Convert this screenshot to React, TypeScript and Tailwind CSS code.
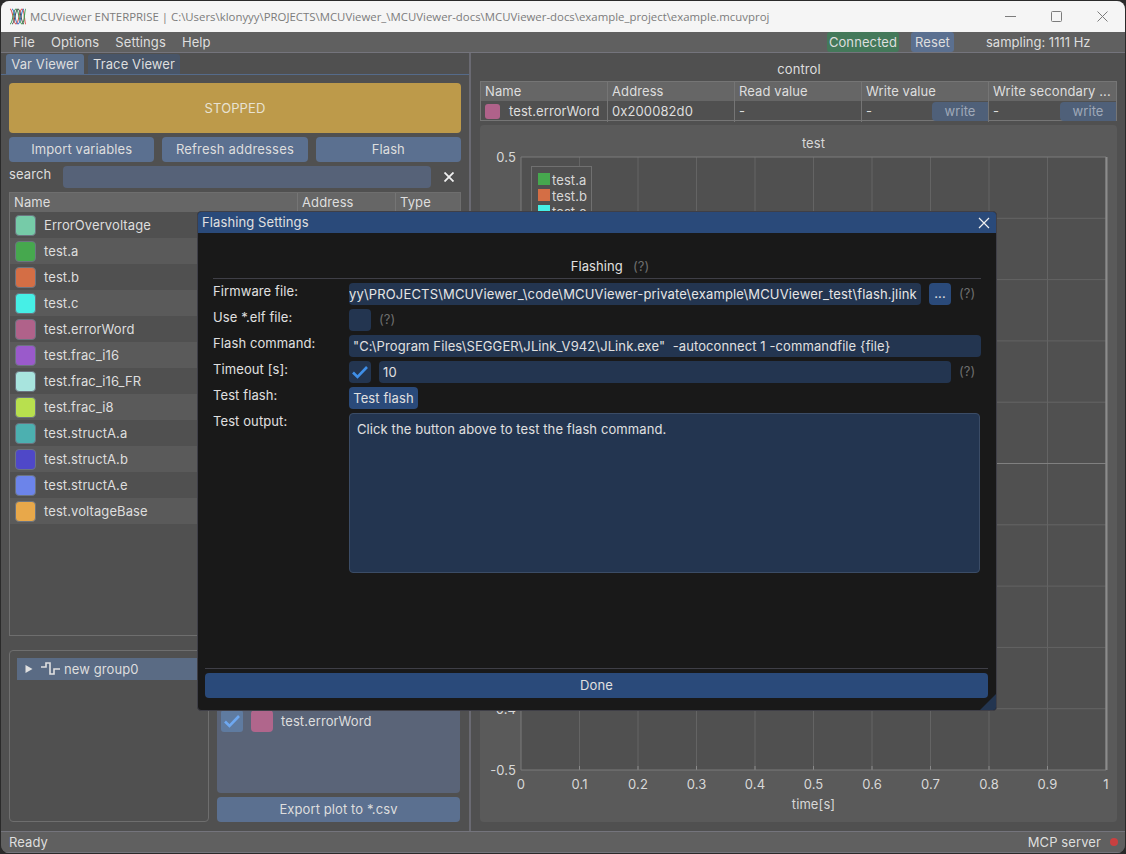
const variables = [
  { name: "ErrorOvervoltage", color: "bg-[#76cba8]" },
  { name: "test.a", color: "bg-[#46a84e]" },
  { name: "test.b", color: "bg-[#d46e45]" },
  { name: "test.c", color: "bg-[#46efe6]" },
  { name: "test.errorWord", color: "bg-[#b0628a]" },
  { name: "test.frac_i16", color: "bg-[#9a5acb]" },
  { name: "test.frac_i16_FR", color: "bg-[#a8e4de]" },
  { name: "test.frac_i8", color: "bg-[#b8e04e]" },
  { name: "test.structA.a", color: "bg-[#4cb0b0]" },
  { name: "test.structA.b", color: "bg-[#4f48c8]" },
  { name: "test.structA.e", color: "bg-[#6c84ea]" },
  { name: "test.voltageBase", color: "bg-[#e8a84a]" },
];

const gridX = [0.1, 0.2, 0.3, 0.4, 0.5, 0.6, 0.7, 0.8, 0.9];
const gridY = [0.4, 0.3, 0.2, 0.1, 0, -0.1, -0.2, -0.3, -0.4];

function Logo() {
  return (
    <svg width="18" height="17" viewBox="0 0 18 17" fill="none" strokeWidth="1.1">
      <path d="M1 1C4 1 4 16 7 16S10 1 13 1 15 16 17 16" stroke="#d9534f" />
      <path d="M1 16C4 16 4 1 7 1S10 16 13 16 15 1 17 1" stroke="#3f9e58" />
      <path d="M3 1C6 1 6 16 9 16S12 1 15 1" stroke="#3b6fc4" />
      <path d="M3 16C6 16 6 1 9 1S12 16 15 16" stroke="#555555" />
    </svg>
  );
}

function Check({ color }: { color: string }) {
  return (
    <svg width="16" height="14" viewBox="0 0 16 14" fill="none" stroke={color} strokeWidth="2.6">
      <path d="M1 7.5L5.5 12L15 2" />
    </svg>
  );
}

function Help() {
  return <span className="text-[#6e6e6e]">(?)</span>;
}

function ControlCell({ children, last }: { children: React.ReactNode; last?: boolean }) {
  return (
    <div className={`flex items-center justify-between pl-[4px] overflow-hidden whitespace-nowrap ${last ? "" : "border-r border-[#757575]"}`}>
      {children}
    </div>
  );
}

function WriteButton() {
  return (
    <div className="w-[56px] h-[19px] rounded-l-[4px] bg-[#4f6079] text-[#9fa9b8] flex items-center justify-center">
      write
    </div>
  );
}

function Chart() {
  return (
    <svg width="637" height="697" viewBox="0 0 637 697" className="block">
      <rect x="41" y="32" width="585" height="613" fill="#505050" />
      {gridX.map((v) => {
        const x = 41 + v * 585;
        return (
          <g key={v}>
            <line x1={x} y1="32" x2={x} y2="645" stroke="#646464" />
            <line x1={x} y1="641" x2={x} y2="645" stroke="#8a8a8a" />
            <text x={x} y="664" fill="#d8d8d8" fontSize="13" textAnchor="middle">{v}</text>
          </g>
        );
      })}
      {gridY.map((v) => {
        const y = 338.5 - v * 613;
        return <line key={v} x1="41" y1={y} x2="626" y2={y} stroke={v === 0 ? "#808080" : "#646464"} />;
      })}
      <path d="M41 645V32H626V645H41" stroke="#7a7a7a" fill="none" />
      <line x1="626.5" y1="32" x2="626.5" y2="645" stroke="#8c8c8c" strokeWidth="2" />
      <text x="36" y="37" fill="#d8d8d8" fontSize="13" textAnchor="end">0.5</text>
      <text x="36" y="589" fill="#d8d8d8" fontSize="13" textAnchor="end">-0.4</text>
      <text x="36" y="650" fill="#d8d8d8" fontSize="13" textAnchor="end">-0.5</text>
      <text x="41" y="664" fill="#d8d8d8" fontSize="13" textAnchor="middle">0</text>
      <text x="626" y="664" fill="#d8d8d8" fontSize="13" textAnchor="middle">1</text>
      <text x="333.5" y="23" fill="#d8d8d8" fontSize="13" textAnchor="middle">test</text>
      <text x="333.5" y="684" fill="#d8d8d8" fontSize="13" textAnchor="middle">time[s]</text>
      <rect x="51.5" y="41.5" width="60" height="70" fill="#505050" stroke="#707070" />
      <rect x="58" y="48" width="12" height="12" fill="#46a84e" />
      <text x="72" y="60" fill="#d8d8d8" fontSize="13">test.a</text>
      <rect x="58" y="64" width="12" height="12" fill="#d46e45" />
      <text x="72" y="76" fill="#d8d8d8" fontSize="13">test.b</text>
      <rect x="58" y="80" width="12" height="12" fill="#46efe6" />
      <text x="72" y="92" fill="#d8d8d8" fontSize="13">test.c</text>
    </svg>
  );
}

function FlashingDialog() {
  return (
    <div className="absolute left-[197px] top-[211px] w-[800px] h-[500px] flex flex-col bg-[#191919] border border-[#3f3f47] rounded-[4px] overflow-hidden text-[#e0e0e0]">
      <div className="h-[21px] shrink-0 bg-[#2a4a7a] flex items-center justify-between pl-[4px] pr-[6px]">
        <span>Flashing Settings</span>
        <svg width="12" height="12" viewBox="0 0 12 12" stroke="#f0f0f0" strokeWidth="1.2">
          <path d="M1 1L11 11M11 1L1 11" />
        </svg>
      </div>
      <div className="px-[15px] pt-[26px]">
        <div className="h-4 flex items-center justify-center gap-[10px] pl-[26px]">
          <span>Flashing</span>
          <Help />
        </div>
        <div className="mt-[3px] border-t border-[#3f3f47]" />
        <div className="mt-[4px] grid grid-cols-[136px_1fr] gap-y-[4px]">
          <div className="leading-4">Firmware file:</div>
          <div className="flex gap-2 h-[22px]">
            <div className="w-[572px] bg-[#233550] rounded-[4px] flex items-center pt-[1px] overflow-hidden whitespace-nowrap tracking-[0.16px] text-[#e6e6e6]">
              yy\PROJECTS\MCUViewer_\code\MCUViewer-private\example\MCUViewer_test\flash.jlink
            </div>
            <div className="w-[22px] bg-[#2a4a7a] rounded-[4px] flex items-center justify-center">...</div>
            <div className="flex items-center"><Help /></div>
          </div>
          <div className="leading-4">Use *.elf file:</div>
          <div className="flex gap-2 h-[22px]">
            <div className="w-[22px] bg-[#233550] rounded-[4px]" />
            <div className="flex items-center"><Help /></div>
          </div>
          <div className="leading-4">Flash command:</div>
          <div className="h-[22px] w-[632px] bg-[#233550] rounded-[4px] flex items-center px-[4px] pt-[1px] whitespace-pre">
            {'"C:\\Program Files\\SEGGER\\JLink_V942\\JLink.exe"  -autoconnect 1 -commandfile {file}'}
          </div>
          <div className="leading-4">Timeout [s]:</div>
          <div className="flex gap-2 h-[22px]">
            <div className="w-[22px] bg-[#233550] rounded-[4px] flex items-center justify-center">
              <Check color="#3f8fe8" />
            </div>
            <div className="w-[572px] bg-[#233550] rounded-[4px] flex items-center px-[4px] pt-[1px]">10</div>
            <div className="flex items-center"><Help /></div>
          </div>
          <div className="leading-4">Test flash:</div>
          <div className="h-[22px] w-[69px] bg-[#2a4a7a] rounded-[4px] flex items-center justify-center pt-[1px]">Test flash</div>
          <div className="leading-4">Test output:</div>
          <div className="h-[160px] w-[631px] bg-[#233550] border border-[#3b4c66] rounded-[4px] px-[7px] py-[7px] leading-4">
            Click the button above to test the flash command.
          </div>
        </div>
      </div>
      <div className="mt-auto pl-[7px] pr-[8px] pb-[12px]">
        <div className="border-t border-[#3f3f47]" />
        <div className="mt-[4px] h-[25px] bg-[#2a4a7a] rounded-[4px] flex items-center justify-center">Done</div>
      </div>
      <svg width="16" height="16" viewBox="0 0 16 16" className="absolute right-0 bottom-0">
        <path d="M16 0V16H0Z" fill="#233550" />
      </svg>
    </div>
  );
}

export default function App() {
  return (
    <div className="relative w-[1126px] h-[854px] bg-[#2a2a2a] overflow-hidden font-['Inter',sans-serif] text-[13px] text-[#dedede] tracking-[0.1px]">
      <div className="absolute inset-0 m-[1px] rounded-[8px] overflow-hidden flex flex-col bg-[#505050]">
        {/* title bar */}
        <div className="h-[31px] shrink-0 bg-[#f5f5f5] flex items-center pl-[8px] text-[#7c7c7c] font-['Open_Sans',sans-serif] text-[11.4px] tracking-normal">
          <Logo />
          <span className="ml-[3px] whitespace-nowrap">
            MCUViewer ENTERPRISE | C:\Users\klonyyy\PROJECTS\MCUViewer_\MCUViewer-docs\MCUViewer-docs\example_project\example.mcuvproj
          </span>
          <div className="ml-auto flex items-center gap-[35px] pr-[17px]">
            <svg width="11" height="11" viewBox="0 0 11 11" stroke="#7c7c7c"><path d="M0 5.5H11" /></svg>
            <svg width="11" height="11" viewBox="0 0 11 11" fill="none" stroke="#7c7c7c"><rect x="0.5" y="0.5" width="10" height="10" rx="1" /></svg>
            <svg width="11" height="11" viewBox="0 0 11 11" stroke="#7c7c7c"><path d="M0.5 0.5L10.5 10.5M10.5 0.5L0.5 10.5" /></svg>
          </div>
        </div>

        {/* menu bar */}
        <div className="h-[21px] shrink-0 bg-[#606060] border-b border-[#74747c] flex items-center pl-[12px]">
          <div className="flex gap-[16px] pt-[1px]">
            <span>File</span>
            <span>Options</span>
            <span>Settings</span>
            <span>Help</span>
          </div>
          <div className="ml-auto flex h-full items-stretch">
            <div className="w-[72px] rounded-[3px] bg-[#44795a] flex items-center justify-center pt-[1px]">Connected</div>
            <div className="ml-[12px] w-[43px] rounded-[3px] bg-[#5b7090] flex items-center justify-center pt-[1px]">Reset</div>
            <div className="ml-[32px] w-[139px] flex items-center pt-[1px] tracking-normal">sampling: 1111 Hz</div>
          </div>
        </div>

        <div className="flex-1 min-h-0 flex">
          {/* left panel */}
          <div className="w-[470px] shrink-0 border-r-2 border-[#6a6a72] flex flex-col">
            <div className="h-[22px] shrink-0 border-b border-[#556b8a] flex items-end pl-[5px] gap-[4px]">
              <div className="w-[78px] h-[20px] rounded-t-[3px] bg-[#5a6f8c] flex items-center justify-center pt-[1px]">Var Viewer</div>
              <div className="w-[92px] h-[20px] rounded-t-[3px] bg-[#485568] flex items-center justify-center pt-[1px]">Trace Viewer</div>
            </div>
            <div className="flex-1 min-h-0 flex flex-col px-[8px] pt-[8px] pb-[9px]">
              <div className="h-[50px] shrink-0 rounded-[4px] bg-[#bd9a4a] flex items-center justify-center pt-[1px] text-[#e8e2d2]">STOPPED</div>
              <div className="mt-[4px] h-[25px] shrink-0 grid grid-cols-3 gap-[8px]">
                <div className="rounded-[4px] bg-[#5b7090] flex items-center justify-center">Import variables</div>
                <div className="rounded-[4px] bg-[#5b7090] flex items-center justify-center tracking-[0.2px]">Refresh addresses</div>
                <div className="rounded-[4px] bg-[#5b7090] flex items-center justify-center">Flash</div>
              </div>
              <div className="mt-[4px] h-[22px] shrink-0 flex items-start">
                <span className="w-[54px] leading-4">search</span>
                <div className="w-[368px] h-full rounded-[4px] bg-[#566278]" />
                <svg width="10" height="10" viewBox="0 0 10 10" stroke="#f0f0f0" strokeWidth="1.8" className="ml-[13px] mt-[6px]">
                  <path d="M0.5 0.5L9.5 9.5M9.5 0.5L0.5 9.5" />
                </svg>
              </div>
              {/* variable table */}
              <div className="mt-[4px] h-[444px] shrink-0 border border-[#6e6e6e] flex flex-col">
                <div className="h-[19px] shrink-0 bg-[#666666] grid grid-cols-[288px_98px_1fr]">
                  <div className="pl-[4px] border-r border-[#757575] flex items-center">Name</div>
                  <div className="pl-[4px] border-r border-[#757575] flex items-center">Address</div>
                  <div className="pl-[4px] flex items-center">Type</div>
                </div>
                {variables.map((v, i) => (
                  <div key={v.name} className={`h-[26px] shrink-0 flex items-center pl-[5px] ${i % 2 === 0 ? "bg-[#505050]" : "bg-[#5a5a5a]"}`}>
                    <div className={`w-[21px] h-[21px] rounded-[4px] border border-[#6c7480] ${v.color}`} />
                    <span className="ml-[8px] pt-[1px]">{v.name}</span>
                  </div>
                ))}
              </div>
              {/* groups and plot variables */}
              <div className="mt-[14px] flex-1 min-h-0 flex gap-[8px]">
                <div className="w-[200px] shrink-0 border border-[#6e6e6e] rounded-[4px] pt-[7px] pl-[7px]">
                  <div className="h-[22px] bg-[#5a6b84] flex items-center pl-[8px]">
                    <svg width="8" height="8" viewBox="0 0 8 8" fill="#e0e0e0"><path d="M0.5 0L7.5 4L0.5 8Z" /></svg>
                    <svg width="19" height="14" viewBox="0 0 19 14" fill="none" stroke="#e0e0e0" strokeWidth="1.6" className="ml-[8px]">
                      <path d="M0 5H5V1H9V12H13V7H19" />
                    </svg>
                    <span className="ml-[4px] pt-[1px]">new group0</span>
                  </div>
                </div>
                <div className="flex-1 min-w-0 flex flex-col mr-[1px]">
                  <div className="flex-1 min-h-0 rounded-[4px] bg-[#5a6478] flex flex-col justify-end px-[4px] pb-[61px]">
                    <div className="flex items-center">
                      <div className="w-[22px] h-[22px] rounded-[3px] bg-[#5f7ba0] flex items-center justify-center">
                        <Check color="#6ea8f0" />
                      </div>
                      <div className="ml-[8px] w-[22px] h-[22px] rounded-[4px] bg-[#b0668c]" />
                      <span className="ml-[8px] pt-[1px]">test.errorWord</span>
                    </div>
                  </div>
                  <div className="mt-[4px] h-[25px] shrink-0 rounded-[4px] bg-[#5b7090] flex items-center justify-center">Export plot to *.csv</div>
                </div>
              </div>
            </div>
          </div>

          {/* right panel */}
          <div className="flex-1 min-w-0 flex flex-col pl-[9px] pr-[7px]">
            <div className="h-[28px] shrink-0 flex items-center justify-center pt-[6px]">control</div>
            <div className="h-[40px] shrink-0 w-[637px] border border-[#757575] flex flex-col">
              <div className="h-[19px] shrink-0 bg-[#666666] grid grid-cols-5">
                <ControlCell>Name</ControlCell>
                <ControlCell>Address</ControlCell>
                <ControlCell>Read value</ControlCell>
                <ControlCell>Write value</ControlCell>
                <ControlCell last>Write secondary ...</ControlCell>
              </div>
              <div className="flex-1 grid grid-cols-5">
                <ControlCell>
                  <div className="flex items-center">
                    <div className="w-[15px] h-[15px] rounded-[3px] bg-[#b0628a]" />
                    <span className="ml-[9px] pt-[1px]">test.errorWord</span>
                  </div>
                </ControlCell>
                <ControlCell><span className="pt-[1px]">0x200082d0</span></ControlCell>
                <ControlCell><span className="pt-[1px]">-</span></ControlCell>
                <ControlCell><span className="pt-[1px]">-</span> <WriteButton /></ControlCell>
                <ControlCell last><span className="pt-[1px]">-</span> <WriteButton /></ControlCell>
              </div>
            </div>
            <div className="mt-[4px] w-[637px] h-[697px] shrink-0 bg-[#5a5a5a] rounded-[4px]">
              <Chart />
            </div>
          </div>
        </div>

        {/* status bar */}
        <div className="h-[22px] shrink-0 bg-[#606060] border-y border-[#74747c] flex items-center justify-between pl-[8px] pr-[7px]">
          <span className="pt-[1px]">Ready</span>
          <div className="flex items-center gap-[9px]">
            <span className="pt-[1px]">MCP server</span>
            <div className="w-[8px] h-[8px] rounded-full bg-[#c94040]" />
          </div>
        </div>
      </div>
      <FlashingDialog />
    </div>
  );
}
